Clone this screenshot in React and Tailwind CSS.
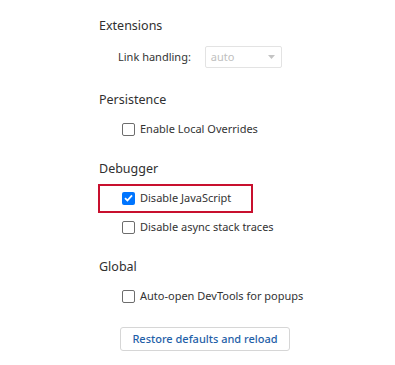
import React from "react";

const font = { fontFamily: '"Noto Sans", "Open Sans", Arial, sans-serif' };

function SectionTitle({ children, className = "" }) {
  return (
    <div className={`h-[20px] flex items-center text-[12.5px] text-[#303030] ${className}`}>
      {children}
    </div>
  );
}

function CheckRow({ label, checked = false, className = "" }) {
  return (
    <div className={`h-[20px] flex items-center pl-[23px] ${className}`}>
      {checked ? (
        <span className="w-[13px] h-[13px] rounded-[2px] bg-[#0075ff] flex items-center justify-center">
          <svg width="9" height="8" viewBox="0 0 9 8">
            <path d="M1 4.2 L3.4 6.5 L8 1.3" fill="none" stroke="#fff" strokeWidth="1.8" />
          </svg>
        </span>
      ) : (
        <span className="w-[13px] h-[13px] rounded-[2px] border border-[#6d6d6d] bg-white" />
      )}
      <span className="ml-[5px] text-[11px] text-[#333]">{label}</span>
    </div>
  );
}

export default function App() {
  return (
    <div className="w-[395px] h-[365px] bg-white pl-[99px] pt-[16px]" style={font}>
      <SectionTitle>Extensions</SectionTitle>
      <div className="mt-[10px] h-[22px] flex items-center pl-[19px]">
        <span className="text-[11px] text-[#333]">Link handling:</span>
        <div className="ml-[14px] w-[77px] h-[22px] border border-[#e3e3e3] rounded-[2px] flex items-center justify-between pl-[5px] pr-[6px]">
          <span className="text-[11px] text-[#c0c0c0]">auto</span>
          <svg width="7" height="4" viewBox="0 0 7 4">
            <path d="M0 0 L7 0 L3.5 4 Z" fill="#c4c4c4" />
          </svg>
        </div>
      </div>

      <SectionTitle className="mt-[22px]">Persistence</SectionTitle>
      <CheckRow className="mt-[9px]" label="Enable Local Overrides" />

      <SectionTitle className="mt-[20px]">Debugger</SectionTitle>
      <div className="relative mt-[9px]">
        <CheckRow label="Disable JavaScript" checked />
        <div className="absolute left-[-1px] top-[-4px] w-[155px] h-[29px] border-2 border-[#c8102e]" />
      </div>
      <CheckRow className="mt-[9px]" label="Disable async stack traces" />

      <SectionTitle className="mt-[20px]">Global</SectionTitle>
      <CheckRow className="mt-[9px]" label="Auto-open DevTools for popups" />

      <div className="mt-[21px] pl-[21px]">
        <button className="w-[170px] h-[24px] border border-[#d6d6d6] rounded-[3px] bg-white text-[11px] font-medium text-[#1f5fa8] flex items-center justify-center">
          Restore defaults and reload
        </button>
      </div>
    </div>
  );
}
